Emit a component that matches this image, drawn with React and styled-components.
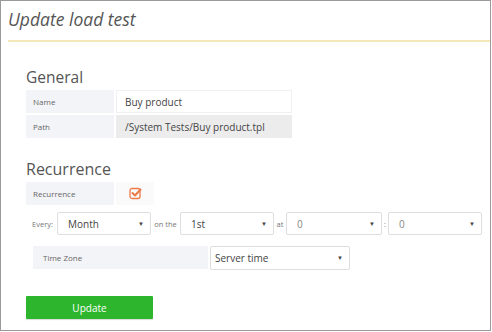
import React from "react"
import styled, { createGlobalStyle } from "styled-components"

const Global = createGlobalStyle`
    html, body {
        margin: 0;
        padding: 0;
        background: #ffffff;
    }
    body {
        font-family: "Open Sans", "Noto Sans", sans-serif;
        color: #444;
    }
`;

const Frame = styled.div`
    box-sizing: border-box;
    width: 491px;
    height: 331px;
    border: 1px solid #9a9a9a;
    background: #fff;
    overflow: hidden;
`;

const Header = styled.div`
    margin: 0 0 0 7px;
    padding: 5px 0 8px 0;
    border-bottom: 2px solid #f5e8b8;
`;

const Title = styled.h1`
    margin: 0;
    font-size: 17.5px;
    font-weight: 400;
    font-style: italic;
    color: #555;
    line-height: 26px;
`;

const Body = styled.div`
    padding: 24px 0 0 25px;
`;

const SectionTitle = styled.h2`
    margin: 0 0 2px 0;
    font-size: ${p => p.size || 16}px;
    font-weight: 400;
    color: #555;
    line-height: 22px;
`;

const Table = styled.div`
    display: grid;
    grid-template-columns: ${p => p.cols};
    gap: 2px;
    margin-left: ${p => p.indent || 0}px;
`;

const Label = styled.div`
    height: 23px;
    background: #f3f4f8;
    font-size: 8px;
    color: #666;
    display: flex;
    align-items: center;
    padding-left: ${p => p.pl || 7}px;
`;

const Value = styled.div`
    box-sizing: border-box;
    height: 23px;
    background: ${p => p.muted ? "#ececec" : "#fff"};
    border: 1px solid ${p => p.muted ? "#ececec" : "#f0f0f0"};
    font-size: 10px;
    color: #444;
    display: flex;
    align-items: center;
    padding-left: 8px;
`;

const CheckCell = styled.div`
    height: 23px;
    background: #fafafa;
    display: flex;
    align-items: center;
    justify-content: center;
`;

const Gap = styled.div`
    height: ${p => p.h}px;
`;

const Row = styled.div`
    display: grid;
    grid-template-columns: 25px 94px 29px 94px 12px 96px 6px 94px;
    align-items: center;
    padding-left: 6px;
    height: 23px;
`;

const Word = styled.span`
    font-size: 7.5px;
    color: #777;
    white-space: nowrap;
    justify-self: ${p => p.left ? "start" : "center"};
`;

const Select = styled.div`
    box-sizing: border-box;
    width: ${p => p.w ? p.w + "px" : "100%"};
    height: ${p => p.h || 23}px;
    border: 1px solid #dedede;
    border-radius: 2px;
    background: #fff;
    display: flex;
    align-items: center;
    justify-content: space-between;
    padding: 0 6px 0 ${p => p.pl || 10}px;
    font-size: 10px;
    color: ${p => p.light ? "#888" : "#444"};
`;

const Caret = styled.span`
    font-size: 6px;
    color: #444;
`;

const Button = styled.button`
    box-sizing: border-box;
    width: 127px;
    height: 23px;
    margin-top: 26px;
    border: none;
    border-radius: 1px;
    background: #2db62d;
    color: #fff;
    font-family: "Open Sans", "Noto Sans", sans-serif;
    font-size: 10px;
    box-shadow: 0 1px 1px rgba(0, 0, 0, 0.15);
`;

const Check = () => (
    <svg width="13" height="13" viewBox="0 0 13 13">
        <rect x="1" y="1.5" width="10" height="10" rx="2" fill="none" stroke="#ee7a4a" strokeWidth="1.3" />
        <path d="M3.5 6 L6 8.5 L11.5 2.5" fill="none" stroke="#ee7a4a" strokeWidth="2" strokeLinecap="round" strokeLinejoin="round" />
    </svg>
);

const Drop = ({ w, children, light, h, pl }) => (
    <Select w={w} light={light} h={h} pl={pl}>
        <span>{children}</span>
        <Caret>▼</Caret>
    </Select>
);

const App = () => (
    <Frame>
        <Global />
        <Header>
            <Title>Update load test</Title>
        </Header>
        <Body>
            <SectionTitle size={15.5}>General</SectionTitle>
            <Table cols="88px 176px">
                <Label>Name</Label>
                <Value>Buy product</Value>
                <Label>Path</Label>
                <Value muted>/System Tests/Buy product.tpl</Value>
            </Table>
            <Gap h={20} />
            <SectionTitle>Recurrence</SectionTitle>
            <Table cols="88px 38px">
                <Label>Recurrence</Label>
                <CheckCell><Check /></CheckCell>
            </Table>
            <Gap h={7} />
            <Row>
                <Word left>Every:</Word>
                <Drop>Month</Drop>
                <Word>on the</Word>
                <Drop>1st</Drop>
                <Word>at</Word>
                <Drop light>0</Drop>
                <Word>:</Word>
                <Drop light>0</Drop>
            </Row>
            <Gap h={11} />
            <Table cols="175px 140px" indent={7}>
                <Label pl={10}>Time Zone</Label>
                <Drop w={140} h={24} pl={4}>Server time</Drop>
            </Table>
            <Button>Update</Button>
        </Body>
    </Frame>
);

export default App;
